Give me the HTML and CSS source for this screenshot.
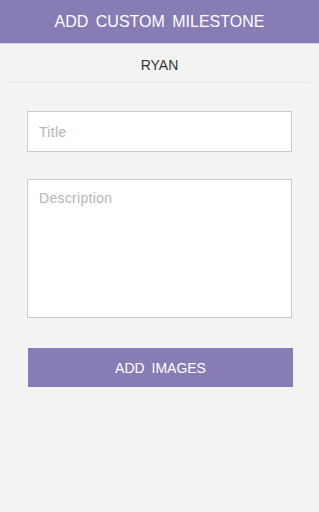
FILE: index.html
```html
<!DOCTYPE html>
<html lang="en">
<head>
    <meta charset="UTF-8">
    <meta name="viewport" content="width=device-width, initial-scale=1.0">
    <title>Add Custom Milestone</title>
    <link rel="stylesheet" href="styles.css">
</head>
<body>
    <!-- header -->
    <div class="header">ADD CUSTOM MILESTONE</div>

    <div class="child-name">RYAN</div>

    <!-- form -->
    <div class="form">
        <input type="text" class="input-field" placeholder="Title">
        <textarea class="input-field description" placeholder="Description"></textarea>
        <button class="button">ADD IMAGES</button>
    </div>
</body>
</html>
```

FILE: styles.css
```css
body {
    font-family: "Liberation Sans", Arial, sans-serif;
    margin: 0;
    height: 512px;
    background-color: #f3f3f3;
}

.header {
    height: 43px;
    line-height: 43px;
    background-color: #877cb4;
    border-bottom: 1px solid #d6d2e6;
    color: #fff;
    text-align: center;
    font-size: 16px;
    word-spacing: 3px;
}

.child-name {
    margin: 0 8px;
    height: 38px;
    line-height: 42px;
    text-align: center;
    font-size: 14px;
    color: #333;
    border-bottom: 1px solid #e6e6e6;
}

.form {
    display: flex;
    flex-direction: column;
    padding: 28px 27px 0 27px;
}

.input-field {
    box-sizing: border-box;
    height: 41px;
    padding: 0 11px;
    font-family: inherit;
    font-size: 14px;
    letter-spacing: 0.3px;
    border: 1px solid #cbcbcb;
    border-radius: 0;
    background-color: #fff;
    outline: none;
}

.input-field::placeholder {
    color: #b5b5b5;
}

.description {
    height: 139px;
    margin-top: 27px;
    padding-top: 10px;
    resize: none;
}

.button {
    height: 39px;
    margin: 30px -1px 0 1px;
    font-family: inherit;
    font-size: 14px;
    word-spacing: 3px;
    color: #fff;
    background-color: #877cb4;
    border: none;
    border-radius: 0;
}
```
